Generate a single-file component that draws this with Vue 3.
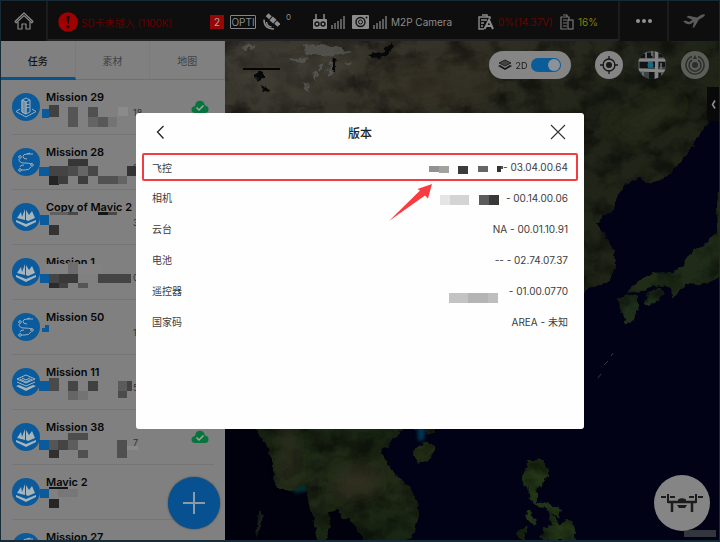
<script setup>
import { ref } from 'vue'

const tabs = ['任务', '素材', '地图']
const activeTab = ref('任务')
const is2D = ref(true)

const B = '#0a5a9c'
const missions = [
  { name: 'Mission 29', icon: 'tower', time: '18', synced: true, blocks: [
    [42, 29, 7, 9, B], [49, 25, 10, 12, '#414141'], [68, 27, 10, 20, '#555555'], [88, 27, 10, 10, '#505050'],
    [88, 37, 10, 10, '#646464'], [98, 37, 10, 10, '#585858'], [108, 37, 9, 10, '#747474'], [118, 27, 10, 9, '#8b8b8b']] },
  { name: 'Mission 28', icon: 'route', time: '2', blocks: [
    [39, 32, 10, 9, B], [68, 24, 20, 7, '#363636'], [49, 31, 19, 10, '#444444'], [68, 31, 10, 10, '#4c4c4c'], [78, 31, 10, 10, '#666666'],
    [88, 31, 10, 10, '#474747'], [49, 41, 10, 9, '#242424'], [58, 41, 10, 8, '#3c3c3c'], [78, 41, 10, 8, '#3d3d3d'],
    [98, 41, 20, 8, '#515151'], [118, 41, 9, 8, '#646464'], [127, 31, 9, 10, '#333333']] },
  { name: 'Copy of Mavic 2', icon: 'terrain', time: '3', blocks: [
    [50, 22, 18, 3, '#606060'], [68, 22, 10, 3, '#484848'], [98, 22, 10, 3, '#151515'], [108, 22, 9, 3, '#484848'],
    [40, 25, 9, 10, B], [49, 35, 10, 10, '#333333']] },
  { name: 'Mission 1', icon: 'terrain', time: '0', blocks: [
    [46, 19, 56, 10, '#828282'], [68, 17, 10, 12, '#6d6d6d'], [40, 29, 9, 9, B], [49, 29, 10, 9, '#444444'], [59, 29, 19, 9, '#393939'],
    [49, 38, 10, 5, '#2b2b2b'], [59, 38, 9, 5, '#414141'], [78, 38, 10, 5, '#555555'], [98, 29, 33, 9, '#444444']] },
  { name: 'Mission 50', icon: 'route', time: '18', blocks: [[45, 25, 4, 3, B], [42, 28, 7, 4, B]] },
  { name: 'Mission 11', icon: 'layers', time: '5', blocks: [
    [39, 26, 10, 10, B], [49, 23, 10, 13, '#4a4a4a'], [68, 26, 10, 10, '#464646'], [68, 36, 10, 9, '#656565'], [78, 36, 10, 9, '#737373'],
    [88, 26, 10, 10, '#404040'], [118, 26, 10, 10, '#5b5b5b'], [127, 26, 5, 10, '#434343'], [118, 36, 9, 7, '#4b4b4b']] },
  { name: 'Mission 38', icon: 'terrain', time: '7', synced: true, blocks: [
    [39, 30, 10, 10, B], [68, 23, 20, 7, '#4d4d4d'], [49, 30, 10, 10, '#555555'], [58, 30, 10, 10, '#444444'], [68, 30, 10, 10, '#5d5d5d'],
    [49, 40, 10, 8, '#303030'], [78, 40, 10, 8, '#505050'], [117, 30, 10, 18, '#505050'], [127, 36, 11, 4, '#8a8a8a']] },
  { name: 'Mavic 2', icon: 'terrain', time: '', blocks: [
    [49, 22, 19, 2, '#151515'], [40, 24, 9, 9, B], [58, 24, 20, 8, '#777777'], [49, 34, 10, 9, '#262626']] },
  { name: 'Mission 27', icon: 'route', time: '', blocks: [] }
]

const versions = [
  { label: '飞控', value: '- 03.04.00.64', mark: true, width: 74, blocks: [
    [0, 13, 10, 6, '#929292'], [10, 13, 10, 7, '#a2a29e'], [29, 13, 10, 8, '#3b3b3b'], [49, 13, 10, 6, '#666666'], [68, 13, 4, 6, '#333333'], [72, 13, 2, 3, '#555555']] },
  { label: '相机', value: '- 00.14.00.06', width: 66, blocks: [
    [0, 11, 10, 10, '#e5e5e5'], [10, 11, 19, 10, '#d4d4d4'], [39, 11, 10, 10, '#5c5c5c'], [49, 11, 10, 10, '#393939']] },
  { label: '云台', value: 'NA - 00.01.10.91' },
  { label: '电池', value: '-- - 02.74.07.37' },
  { label: '遥控器', value: '- 01.00.0770', width: 60, blocks: [
    [0, 16, 19, 10, '#c3c3c3'], [19, 16, 20, 10, '#b4b4b4'], [39, 16, 10, 10, '#bebebe']] },
  { label: '国家码', value: 'AREA - 未知' }
]
</script>

<template>
  <div class="app">
    <header class="topbar">
      <button class="cell home" aria-label="主页">
        <svg width="20" height="20" viewBox="0 0 20 20" fill="none" stroke="#8c8c8c" stroke-width="1.2" stroke-linejoin="round">
          <path d="M1 10.5 10 2l9 8.5-1.2 1.3L10 4.6l-7.8 7.2z" />
          <path d="M4 11v7h4v-5h4v5h4v-7" />
        </svg>
      </button>
      <div class="status">
        <div class="alert">
          <svg width="20" height="20" viewBox="0 0 20 20"><circle cx="10" cy="10" r="9.8" fill="#a00000" /><path d="M8.5 4h3l-.7 8H9.2z" fill="#170000" /><circle cx="10" cy="15" r="1.4" fill="#170000" /></svg>
          <span>SD卡未插入 (1100K)</span>
        </div>
        <div class="group gps">
          <span class="count">2</span>
          <span class="opti">OPTI</span>
          <svg width="18" height="18" viewBox="0 0 18 18" fill="#8c8c8c">
            <g transform="rotate(42 11 7)"><rect x="8.5" y="4.5" width="5" height="5" /><rect x="3" y="5" width="4.5" height="4" /><rect x="14.5" y="5" width="4.5" height="4" /></g>
            <path d="M2 6.5Q2 16 12 16M4.5 9Q5 13.5 9.5 14" fill="none" stroke="#8c8c8c" stroke-width="1.5" />
          </svg>
          <sup>0</sup>
        </div>
        <div class="group link">
          <svg width="14" height="16" viewBox="0 0 14 16"><path d="M3 0v5M11 0v5" stroke="#8c8c8c" stroke-width="1.5" /><rect y="5" width="14" height="10" rx="1" fill="#8c8c8c" /><circle cx="4" cy="10" r="2" fill="none" stroke="#111" stroke-width="1.4" /><circle cx="10" cy="10" r="2" fill="none" stroke="#111" stroke-width="1.4" /></svg>
          <svg width="14" height="14" viewBox="0 0 14 14" stroke="#777" stroke-width="1.5"><path d="M1 14v-4M4 14V8M7 14V6M10 14V4M13 14V1" /></svg>
        </div>
        <div class="group camera">
          <svg width="17" height="14" viewBox="0 0 17 14"><rect width="17" height="14" rx="1" fill="#8c8c8c" /><circle cx="8.5" cy="7" r="4.5" fill="none" stroke="#111" stroke-width="1.4" /><circle cx="8.5" cy="7" r="2" fill="none" stroke="#111" /><circle cx="14.5" cy="2.5" r="1" fill="#111" /></svg>
          <svg width="14" height="14" viewBox="0 0 14 14" stroke="#777" stroke-width="1.5"><path d="M1 14v-4M4 14V8M7 14V6M10 14V4M13 14V1" /></svg>
          <span>M2P Camera</span>
        </div>
        <div class="group power">
          <svg width="16" height="16" viewBox="0 0 16 16" fill="none" stroke="#8c8c8c" stroke-width="1.4"><path d="M6 15H1V3h11v2M4 1h5v2M3 6h6M3 9h3M3 12h2" /><path d="M6.5 15 11 6l4 9M8 12h5" stroke-width="2" /></svg>
          <span class="low">0%(14.37V)</span>
        </div>
        <div class="group tablet">
          <svg width="14" height="16" viewBox="0 0 14 16" fill="none" stroke="#777" stroke-width="1.2"><path d="M7 15H1V3h8v3M3 1h4v2M3 6h4M3 9h4M3 12h4" /><rect x="8" y="6" width="5" height="9" /></svg>
          <span class="warn">16%</span>
        </div>
      </div>
      <button class="cell" aria-label="更多">
        <svg width="18" height="6" viewBox="0 0 18 6" fill="#929292"><circle cx="3" cy="3" r="2" /><circle cx="9" cy="3" r="2" /><circle cx="15" cy="3" r="2" /></svg>
      </button>
      <button class="cell fly" aria-label="起飞">
        <svg width="24" height="16" viewBox="0 0 24 16" fill="#5a5a5a"><path d="M1 8.5 3.500 7.500 7 9l3.500-2L4.500 4l2-1.200L15 4.500l4.500-2.700Q22 .8 23 1.500q0 1.500-2.500 3L17 6.500 12.500 14l-2 1 1.500-6-3.500 2Q5 12 1 8.500z" /></svg>
      </button>
    </header>

    <main class="workspace">
      <aside class="sidebar">
        <nav class="tabs">
          <button v-for="tab in tabs" :key="tab" :class="{ active: tab === activeTab }" @click="activeTab = tab">{{ tab }}</button>
        </nav>
        <ul class="missions">
          <li v-for="m in missions" :key="m.name">
            <svg class="badge" width="28" height="28" viewBox="0 0 28 28">
              <circle cx="14" cy="14" r="14" fill="#0a5a9c" />
              <g v-if="m.icon === 'tower'" fill="none" stroke="#9daebb" stroke-width="1">
                <path d="M10 7l4-2 4 2v12l-4 2-4-2zM10 7l4 2 4-2M14 9v12M14 12l4-1M14 15l4-1M8 16l-4 2.500L14 24l10-5.500L20 16" /><path d="M10 7l4 2v12l-4-2z" fill="#77909f" />
              </g>
              <g v-else-if="m.icon === 'route'" fill="none" stroke="#9daebb" stroke-width="1">
                <circle cx="8" cy="9" r="1.300" /><circle cx="20" cy="17" r="1.300" /><circle cx="8" cy="22" r="1.300" />
                <path d="M21 6h-6q-4 0-4 2.500T15 11M7 11q0 4 5 4t8 1M19 19q-2 3-6 3H9M12 17q-4 0-4 2M15 6l3-1" />
              </g>
              <g v-else-if="m.icon === 'terrain'" fill="#a7b5bd">
                <path d="M5 15 9 9l1 5 3-8v11zM14 17V7l3 5 3-4 3 7-7 3zM4 17l10 4 10-4v2l-10 5-10-5z" />
              </g>
              <g v-else fill="#a7b5bd">
                <path d="m4 18 3-1 7 3 7-3 3 1-10 5z" /><path d="m5 14 9 4 9-4M5 11l9-4 9 4-9 4z" fill="none" stroke="#a7b5bd" /><path d="m8 11 6 3 6-3M10 10l4 2 4-2" fill="none" stroke="#a7b5bd" />
              </g>
            </svg>
            <strong>{{ m.name }}</strong>
            <span class="time">{{ m.time }}</span>
            <svg v-if="m.synced" class="cloud" width="18" height="14" viewBox="0 0 18 14"><path d="M4.500 13Q.5 13 .5 9.500.5 6.500 4 6 4.500.8 9 .8q4 0 5 4.700 3.500.5 3.500 4 0 3.500-4 3.500z" fill="#08733c" /><path d="m5.500 7.500 2.500 2.500 4.500-4.500" fill="none" stroke="#9aa89f" stroke-width="1.500" /></svg>
            <svg class="mosaic" width="140" height="55" viewBox="0 0 140 55" shape-rendering="crispEdges">
              <rect v-for="(b, i) in m.blocks" :key="i" :x="b[0]" :y="b[1]" :width="b[2]" :height="b[3]" :fill="b[4]" />
            </svg>
          </li>
        </ul>
        <button class="add" aria-label="新建任务">
          <svg width="24" height="24" viewBox="0 0 24 24" stroke="#8c9ba6" stroke-width="2"><path d="M12 1v22M1 12h22" /></svg>
        </button>
      </aside>

      <section class="map">
        <svg class="terrain" viewBox="225 41 494 499" preserveAspectRatio="xMidYMid slice">
          <defs>
            <linearGradient id="soil" x1="0" y1="0" x2="1" y2="0.7">
              <stop offset="0" stop-color="#3c3932" /><stop offset=".3" stop-color="#353228" /><stop offset=".55" stop-color="#23261a" /><stop offset="1" stop-color="#1a2214" />
            </linearGradient>
            <linearGradient id="jungle" x1="0" y1="0" x2="0" y2="1">
              <stop offset="0" stop-color="#182512" /><stop offset=".5" stop-color="#222b18" /><stop offset="1" stop-color="#172512" />
            </linearGradient>
            <filter id="grain" x="0" y="0" width="100%" height="100%" color-interpolation-filters="sRGB">
              <feTurbulence type="fractalNoise" baseFrequency=".04 .055" numOctaves="5" seed="8" result="n" />
              <feColorMatrix in="n" values="0 0 0 0 0  0 0 0 0 0  0 0 0 0 0  2.5 0 0 0 -.95" result="d" />
              <feComposite in="d" in2="SourceGraphic" operator="in" result="m" />
              <feComponentTransfer in="m" result="s"><feFuncA type="linear" slope=".5" /></feComponentTransfer>
              <feMerge><feMergeNode in="SourceGraphic" /><feMergeNode in="s" /></feMerge>
            </filter>
            <filter id="coast" x="-10%" y="-10%" width="120%" height="120%" color-interpolation-filters="sRGB">
              <feTurbulence type="fractalNoise" baseFrequency=".14" numOctaves="3" seed="4" />
              <feDisplacementMap in="SourceGraphic" scale="7" xChannelSelector="R" yChannelSelector="G" />
            </filter>
            <filter id="soft" x="-30%" y="-30%" width="160%" height="160%"><feGaussianBlur stdDeviation="7" /></filter>
            <filter id="haze" x="-30%" y="-30%" width="160%" height="160%"><feGaussianBlur stdDeviation="1.5" /></filter>
          </defs>
          <rect x="225" y="41" width="500" height="500" fill="#020216" />
          <rect x="225" y="428" width="160" height="112" fill="#01010e" />
          <g filter="url(#haze)">
            <path d="M282 485l24-2 2 8-12 2z" fill="#062d30" />
            <path d="M417 428l9-1-2 13-6 1z" fill="#05304d" />
          </g>
          <g filter="url(#coast)">
            <g filter="url(#grain)">
              <path d="M215 30H735V105L718 112 707 123 690 150 672 172 660 181 645 183 640 177 625 185 617 196 615 207 603 217 597 224 606 237 614 250 615 266 610 280 585 292 560 290 500 380 434 428 434 434 424 434 424 428H215z" fill="url(#soil)" />
              <path d="M250 420 262 438 268 449 275 468 274 487 291 490 306 484 309 500 312 516 316 528 318 545H325L330 525 328 511 337 510 341 518 350 518 360 534 367 545H403L414 533 419 520 419 505 410 488 397 475 386 462 381 453 389 442 402 432 409 420z" fill="url(#jungle)" />
              <path d="M415 449q4-7 14-6 8 1 6 7-5 12-14 12-9-1-6-13z" fill="#242f15" />
              <path d="M725 180 718 190 717 207 718 230 707 243 693 251 683 265 672 272 650 273 637 282 626 293 642 291 659 285 671 287 672 297 681 290 687 283 701 284 713 281 725 276z" fill="#202c18" />
              <path d="M617 299 627 295 638 297 638 306 633 322 626 325 622 313zM645 294 659 287 664 292 658 300 647 306z" fill="#1f2f1b" />
              <path d="M528 460 545 460 548 472 544 484 537 490 537 501 547 503 561 509 559 518 548 511 537 505 530 500 528 488 522 480 526 470zM528 511l9 8-2 8-8-8zM550 512l12 14-5 3-9-11zM543 528l29-8 4 20H542zM516 535l12-10-5 15z" fill="#233617" />
              <path d="M259 510h3l-2 20-4 8z" fill="#172019" />
            </g>
          </g>
          <g filter="url(#soft)">
            <path d="M281 430h12l4 46-10 4z" fill="#3a3528" opacity=".8" />
            <path d="M338 472l35-8 6 26-44 10z" fill="#353123" opacity=".8" />
            <path d="M225 60 300 44l60 10-20 40-80 12z" fill="#45413a" opacity=".5" />
            <path d="M370 70l110-10 20 30-90 20z" fill="#353326" opacity=".6" />
            <path d="M610 120l60-30 15 15-50 35z" fill="#252b18" opacity=".8" />
          </g>
          <g filter="url(#coast)">
            <path d="M304 44l30 2 18 6-20 4-26-2zM329 60l5 2-2 12-4 3zM288 60l10-3 12 2-10 4zM318 66l7-2-6 8zM303 82l8 6-4 4zM240 48l10-4 6 2-9 4zM345 62l6 1-2 3zM312 72l5-1 2 6-5 3z" fill="#5c5c58" opacity=".7" />
            <path d="M332 57l4 2-2 12-4-1zM367 55l14-2 9-10 4 2-8 11-12 3zM255 75l7-3 3 5-7 5zM261 87l6 1 3 4-7-1z" fill="#050708" />
          </g>
          <path d="M611 356l2-3M604 365l4-4M598 378l3-4" stroke="#3b3a42" />
          <path d="M243 69h37" stroke="#080403" stroke-width="2" />
        </svg>
        <div class="tools">
          <label class="mode">
            <svg width="14" height="12" viewBox="0 0 14 12"><path d="m0 7 7 4 7-4-2-1-5 3-5-3z" fill="#171717" /><path d="m1 4 6-3 6 3-6 3z" fill="#444" stroke="#222" /></svg>
            <span>2D</span>
            <input v-model="is2D" type="checkbox" />
          </label>
          <button class="round" aria-label="定位">
            <svg width="20" height="20" viewBox="0 0 20 20" fill="none" stroke="#181818" stroke-width="1.3"><circle cx="10" cy="10" r="6" /><circle cx="10" cy="10" r="3" fill="#181818" stroke="none" /><path d="M10 1v4M10 15v4M1 10h4M15 10h4" /></svg>
          </button>
          <button class="round satellite" aria-label="地图类型">
            <svg width="28" height="28" viewBox="0 0 28 28"><clipPath id="disc"><circle cx="14" cy="14" r="14" /></clipPath><g clip-path="url(#disc)"><path fill="#3c4242" d="M0 0h28v28H0z" /><path d="M2 3h6v4H2zM9 2h5v5H9zM2 11h8v6H2zM11 20h5v8h-5zM21 11h6v5h-6zM21 22h5v4h-5zM15 10h2v6h-2zM21 3h4v3h-4z" fill="#101414" /><path d="M0 9h28M0 19l28 1M18.500 0v28" stroke="#868686" stroke-width="3" /><path d="M8 0v9M14 0v5M5 19v9M10 12h3M23 12v6M24 22v6" stroke="#757878" stroke-width="1.500" /><circle cx="12.500" cy="14" r="3" fill="#136a84" /></g></svg>
          </button>
          <button class="round muted" aria-label="朝向">
            <svg width="22" height="22" viewBox="0 0 22 22" fill="none" stroke="#2d2e2b" stroke-width="1.500"><path d="M8 2.500a9 9 0 1 0 6 0M8 6a6 6 0 1 0 6 0" /><circle cx="11" cy="11" r="3" fill="#2d2e2b" stroke="none" /><path d="m11 1 2 4H9z" fill="#2d2e2b" stroke="none" /></svg>
          </button>
        </div>
        <button class="drawer" aria-label="展开">
          <svg width="5" height="9" viewBox="0 0 5 9" fill="none" stroke="#929292" stroke-width="1.500"><path d="M4 .5 1.500 4.500 4 8.500" /></svg>
        </button>
        <span class="legal"></span>
        <button class="drone" aria-label="飞行器">
          <svg width="44" height="20" viewBox="0 0 44 20" fill="none" stroke="#1c1c1c" stroke-width="2"><path d="M1 4h5M10 4h5M29 4h5M38 4h5M8 1v9M36 1v9" /><path d="M8 9h28M12 10v9M32 10v9" stroke-width="2.500" /><path d="M18 6.500Q22 4 26 6.500V8h-8zM17 12h10l-2 3h-6z" fill="#1c1c1c" stroke="none" /></svg>
        </button>
      </section>
    </main>

    <div class="backdrop">
      <div class="dialog" role="dialog" aria-labelledby="version-title">
        <div class="dialog-head">
          <button aria-label="返回"><svg width="16" height="16" viewBox="0 0 16 16" fill="none" stroke="#222" stroke-width="1.3"><path d="M9.500 2 3.500 8l6 6.500" /></svg></button>
          <h1 id="version-title">版本</h1>
          <button aria-label="关闭"><svg width="16" height="16" viewBox="0 0 16 16" fill="none" stroke="#333" stroke-width="1.1"><path d="m1 1 14 14M15 1 1 15" /></svg></button>
        </div>
        <dl class="versions">
          <div v-for="v in versions" :key="v.label" :class="{ marked: v.mark }">
            <dt>{{ v.label }}</dt>
            <dd>
              <svg v-if="v.blocks" :width="v.width" height="28" :viewBox="`0 0 ${v.width} 28`" shape-rendering="crispEdges">
                <rect v-for="(b, i) in v.blocks" :key="i" :x="b[0]" :y="b[1]" :width="b[2]" :height="b[3]" :fill="b[4]" />
              </svg>
              <span>{{ v.value }}</span>
            </dd>
          </div>
        </dl>
        <svg class="arrow" width="44" height="38" viewBox="0 0 44 38" fill="#f83d40"><path d="M0 37 31 6.500 28.500 5 43 0 39 14.500 36 11.500z" /></svg>
      </div>
    </div>
  </div>
</template>

<style>
body {
  margin: 0;
  background: #141e26;
}
</style>

<style scoped>
* {
  box-sizing: border-box;
}
.app {
  height: 100vh;
  display: flex;
  flex-direction: column;
  padding: 1px 1px 2px;
  background: #172a38;
  font-family: Inter, "Noto Sans CJK SC", sans-serif;
  font-size: 10px;
  color: #8c8c8c;
}
button {
  padding: 0;
  border: 0;
  background: none;
  font: inherit;
  color: inherit;
  display: flex;
  align-items: center;
  justify-content: center;
}
svg {
  display: block;
  flex: none;
}
.topbar {
  display: flex;
  flex: none;
  height: 40px;
  gap: 2px;
  background: #1c1c1c;
}
.cell {
  width: 47px;
  background: #0e0e0e;
}
.home {
  width: 45px;
}
.fly {
  width: 50px;
}
.status {
  flex: 1;
  display: flex;
  align-items: center;
  background: #0e0e0e;
  border-bottom: 2px solid #252525;
  padding: 4px 20px 0 10px;
  white-space: nowrap;
}
.alert {
  display: flex;
  align-items: center;
  gap: 3px;
  width: 152px;
  color: #640000;
}
.group {
  display: flex;
  align-items: center;
  gap: 4px;
}
.gps {
  gap: 6px;
  width: 103px;
}
.count {
  width: 14px;
  line-height: 14px;
  text-align: center;
  background: #960808;
  color: #a9a0a0;
}
.opti {
  width: 26px;
  line-height: 12px;
  border: 1px solid #858585;
  border-radius: 1px;
  text-align: center;
}
sup {
  font-size: 8px;
  line-height: 8px;
  align-self: flex-start;
}
.link {
  width: 39px;
}
.camera {
  flex: 1;
}
.power {
  width: 82px;
}
.low {
  color: #640505;
}
.warn {
  color: #858009;
}
.workspace {
  flex: 1;
  min-height: 0;
  display: flex;
}
.sidebar {
  position: relative;
  width: 224px;
  flex: none;
  overflow: hidden;
  background: #808080;
}
.tabs {
  display: grid;
  grid-template-columns: repeat(3, 1fr);
  height: 39px;
}
.tabs button {
  color: #424242;
  border-bottom: 1px solid #707070;
  border-right: 1px solid #7a7a7a;
}
.tabs .active {
  padding-top: 2px;
  color: #101010;
  font-weight: 500;
  border-bottom: 3px solid #07528b;
}
.missions {
  list-style: none;
  margin: 0;
  padding: 0;
}
.missions li {
  position: relative;
  height: 55px;
  display: grid;
  grid-template-columns: 28px 1fr 18px;
  column-gap: 6px;
  align-content: start;
  padding: 9px 16px 0 11px;
}
.missions li::after {
  content: "";
  position: absolute;
  left: 11px;
  right: 11px;
  bottom: 0;
  border-bottom: 1px solid #757575;
}
.badge {
  grid-row: 1 / 3;
  margin-top: 4px;
}
.missions strong {
  font-size: 11px;
  line-height: 16px;
  font-weight: 600;
  color: #070707;
  white-space: nowrap;
}
.time {
  grid-column: 2;
  padding-left: 87px;
  font-size: 9px;
  line-height: 10px;
  color: #303030;
}
.cloud {
  grid-column: 3;
  grid-row: 1 / 3;
  margin-top: 11px;
}
.mosaic {
  position: absolute;
  left: -1px;
  top: 0;
}
.add {
  position: absolute;
  right: 5px;
  bottom: 11px;
  width: 52px;
  height: 52px;
  border-radius: 50%;
  background: #075191;
  box-shadow: 0 0 2px #404040;
}
.map {
  position: relative;
  flex: 1;
  min-width: 0;
  overflow: hidden;
  background: #020216;
}
.terrain {
  position: absolute;
  inset: 0;
  width: 100%;
  height: 100%;
}
.tools {
  position: relative;
  display: flex;
  justify-content: flex-end;
  gap: 15px;
  padding: 10px 10px 0;
}
.mode {
  width: 82px;
  height: 28px;
  margin-right: 9px;
  padding: 0 10px 0 9px;
  display: flex;
  align-items: center;
  justify-content: space-between;
  border-radius: 14px;
  background: #858585;
  color: #1a1a1a;
  font-size: 9px;
}
.mode input {
  appearance: none;
  width: 30px;
  height: 14px;
  margin: 0;
  padding: 1px;
  border-radius: 7px;
  background: #4c4c4c;
  display: flex;
}
.mode input::before {
  content: "";
  width: 12px;
  height: 12px;
  border-radius: 50%;
  background: #8b9399;
}
.mode input:checked {
  background: #0a5d99;
  justify-content: flex-end;
}
.round {
  width: 28px;
  height: 28px;
  border-radius: 50%;
  background: #858585;
}
.satellite {
  background: #3c4242;
}
.muted {
  background: #5b5d57;
}
.drawer {
  position: absolute;
  right: 0;
  top: 46px;
  width: 12px;
  height: 34px;
  background: #080908;
}
.legal {
  position: absolute;
  right: 3px;
  bottom: 3px;
  width: 32px;
  height: 7px;
  background: #33363c;
}
.drone {
  position: absolute;
  right: 9px;
  bottom: 9px;
  width: 56px;
  height: 56px;
  border-radius: 50%;
  background: #858585;
}
.backdrop {
  position: fixed;
  inset: 0;
  display: grid;
  place-items: center;
}
.dialog {
  position: relative;
  width: 448px;
  max-width: 94vw;
  min-height: 316px;
  border-radius: 3px;
  background: #fefefe;
  color: #3c3c3c;
}
.dialog-head {
  display: flex;
  align-items: center;
  justify-content: space-between;
  height: 40px;
  padding: 0 18px 2px 18px;
}
.dialog-head h1 {
  margin: 0;
  font-size: 12px;
  font-weight: 500;
  color: #222;
}
.versions {
  margin: 0 6px;
}
.versions div {
  display: flex;
  align-items: center;
  justify-content: space-between;
  height: 31px;
  padding: 0 10px;
}
.versions .marked {
  height: 28px;
  margin-bottom: 1px;
  padding: 0 8px;
  border: 2px solid #f23c40;
  border-radius: 2px;
}
dd {
  margin: 0;
  display: flex;
  align-items: center;
}
.arrow {
  position: absolute;
  right: 151px;
  top: 71px;
}
</style>
